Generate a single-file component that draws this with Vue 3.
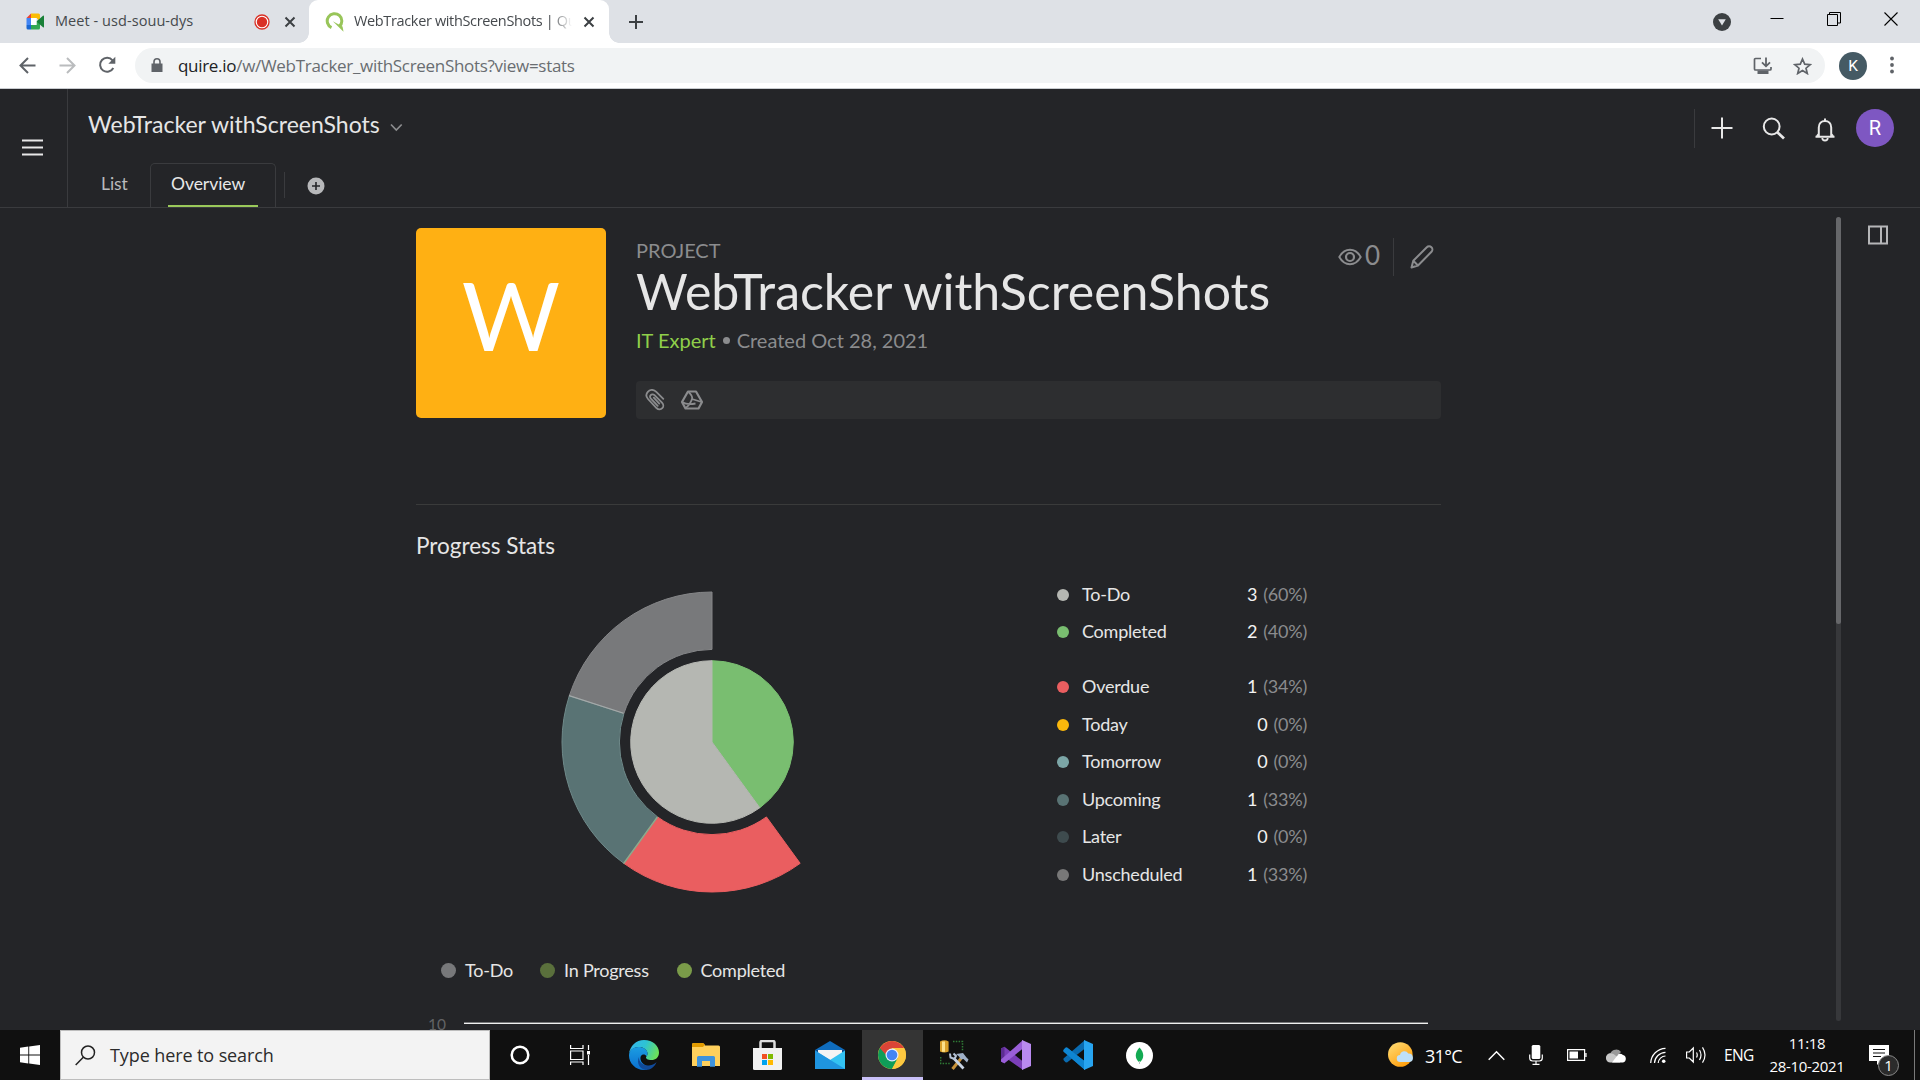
<script setup>
const stats = [
  [
    { label: 'To-Do', n: 3, pct: '60%', color: '#b5b7b2' },
    { label: 'Completed', n: 2, pct: '40%', color: '#79be70' },
  ],
  [
    { label: 'Overdue', n: 1, pct: '34%', color: '#ea5e60' },
    { label: 'Today', n: 0, pct: '0%', color: '#fbb80c' },
    { label: 'Tomorrow', n: 0, pct: '0%', color: '#7ca6a7' },
    { label: 'Upcoming', n: 1, pct: '33%', color: '#597374' },
    { label: 'Later', n: 0, pct: '0%', color: '#3e4b4e' },
    { label: 'Unscheduled', n: 1, pct: '33%', color: '#787878' },
  ],
]

const legend = [
  { label: 'To-Do', color: '#77787a', width: 99 },
  { label: 'In Progress', color: '#5a703c', width: 136.5 },
  { label: 'Completed', color: '#7a9b49', width: 120 },
]

const pt = (r, a) => {
  const t = (a * Math.PI) / 180
  return `${(r * Math.sin(t)).toFixed(2)} ${(-r * Math.cos(t)).toFixed(2)}`
}
const ring = (a, b, ri = 92.6, ro = 150) =>
  `M${pt(ro, a)}A${ro} ${ro} 0 0 1 ${pt(ro, b)}L${pt(ri, b)}A${ri} ${ri} 0 0 0 ${pt(ri, a)}Z`
const wedge = (a, b, r = 81.3) =>
  `M0 0L${pt(r, a)}A${r} ${r} 0 ${b - a > 180 ? 1 : 0} 1 ${pt(r, b)}Z`

const slices = [
  { d: ring(144, 216), fill: '#ea5e60', stroke: '#ea5e60' },
  { d: ring(216, 288), fill: '#597374', stroke: '#6f8a8a' },
  { d: ring(288, 360), fill: '#78797b', stroke: '#858688' },
  { d: wedge(0, 144), fill: '#79be70', stroke: '#79be70' },
  { d: wedge(144, 360), fill: '#b5b7b2', stroke: '#b5b7b2' },
]
</script>

<template>
  <div class="screen">
    <div class="tabstrip">
      <div class="tab idle">
        <svg class="fav" width="19" height="17" viewBox="0 0 19 17">
          <path d="M5 0.5V5H0.5z" fill="#ea4335" />
          <path d="M0.5 5H5v7H0.5z" fill="#4285f4" />
          <path d="M0.5 12H5v4.5H2a1.5 1.5 0 0 1-1.5-1.5z" fill="#1967d2" />
          <path d="M5 .5h7.5A1.5 1.5 0 0 1 14 2v6.500L10.500 5H5z" fill="#fbbc04" />
          <path d="M5 12h5.500V8.500L14 6v9a1.500 1.500 0 0 1-1.500 1.500H5z" fill="#34a853" />
          <path d="M10.500 8.500 17 2.700q1-.6 1 .5v10.600q0 1-1 .4z" fill="#188038" />
          <path d="M5 5h5.500v7H5z" fill="#fff" />
        </svg>
        <span class="tabtext meet">Meet - usd-souu-dys</span>
        <svg width="16" height="16" viewBox="0 0 16 16">
          <circle cx="8" cy="8" r="7" fill="#fff" stroke="#d93025" stroke-width="1.300" />
          <circle cx="8" cy="8" r="5.200" fill="#d93025" />
        </svg>
        <svg class="x1" width="12" height="12" viewBox="0 0 12 12"><path d="M1.500 1.500l9 9m0-9l-9 9" stroke="#3c4043" stroke-width="2" /></svg>
      </div>
      <div class="tab active">
        <svg class="q" width="20" height="20" viewBox="0 0 20 20">
          <path d="M6.500 15.600A7.300 7.300 0 1 1 14.300 14.500" fill="none" stroke="#98c559" stroke-width="3" />
          <path d="M7.800 9.200l9.700 5.300 1 5.200z" fill="#98c559" />
        </svg>
        <span class="tabtext web">WebTracker withScreenShots | Quire</span>
        <svg class="x2" width="12" height="12" viewBox="0 0 12 12"><path d="M1.500 1.500l9 9m0-9l-9 9" stroke="#3c4043" stroke-width="2" /></svg>
      </div>
      <svg class="newtab" width="16" height="16" viewBox="0 0 16 16"><path d="M8 1v14M1 8h14" stroke="#3c4043" stroke-width="2" /></svg>
      <div class="winctl">
        <svg width="18" height="18" viewBox="0 0 18 18"><circle cx="9" cy="9" r="9" fill="#3c4043" /><path d="M5.200 6.200h7.600L9 12.500z" fill="#dee1e6" /></svg>
        <svg class="min" width="14" height="14" viewBox="0 0 14 14"><path d="M.5 7.500H13.500" stroke="#000" /></svg>
        <svg class="max" width="14" height="14" viewBox="0 0 14 14"><path d="M.5 2.500h10v11H.5zM2.500 2.500v-2h11v10.500h-3" fill="none" stroke="#000" /></svg>
        <svg class="cls" width="14" height="14" viewBox="0 0 14 14"><path d="M.5.5l13 13m0-13l-13 13" stroke="#000" stroke-width="1.100" /></svg>
      </div>
    </div>

    <div class="toolbar">
      <svg class="back" width="17" height="17" viewBox="0 0 17 17"><path d="M16.500 8.500H2M9 1 1.500 8.500 9 16" fill="none" stroke="#5f6368" stroke-width="2" /></svg>
      <svg class="fwd" width="17" height="17" viewBox="0 0 17 17"><path d="M.5 8.500H15M8 1l7.500 7.500L8 16" fill="none" stroke="#babcbe" stroke-width="2" /></svg>
      <svg class="reload" width="18" height="18" viewBox="0 0 18 18"><path d="M15.300 12A7 7 0 1 1 14.500 4.300" fill="none" stroke="#5f6368" stroke-width="2" /><path d="M17.300 .8V7.800H10.300z" fill="#5f6368" /></svg>
      <div class="omni">
        <svg width="12" height="15" viewBox="0 0 12 15"><path d="M.5 5.500h11V14H.5z" fill="#5f6368" /><path d="M3 6V3.800a3 3 0 0 1 6 0V6" fill="none" stroke="#5f6368" stroke-width="1.600" /></svg>
        <span class="url"><b>quire.io</b>/w/WebTracker_withScreenShots?view=stats</span>
        <svg class="install" width="20" height="18" viewBox="0 0 20 18"><path d="M8 1.500H2.500a1 1 0 0 0-1 1v9.500a1 1 0 0 0 1 1h14.500a1 1 0 0 0 1-1v-2" fill="none" stroke="#5f6368" stroke-width="1.700" /><path d="M4.500 13.500h11V17h-11z" fill="#5f6368" /><path d="M13 .5v8.300M9 5.300l4 4 4-4" fill="none" stroke="#5f6368" stroke-width="1.800" /></svg>
        <svg class="star" width="19" height="18" viewBox="0 0 19 18"><path d="M9.500 2l2.200 5.100 5.500.5-4.200 3.600 1.300 5.300-4.800-2.900-4.800 2.900 1.300-5.300L1.800 7.600l5.500-.5z" fill="none" stroke="#5f6368" stroke-width="1.700" /></svg>
      </div>
      <span class="kav">K</span>
      <svg width="4" height="18" viewBox="0 0 4 18" fill="#5f6368"><circle cx="2" cy="2.500" r="1.900" /><circle cx="2" cy="9" r="1.900" /><circle cx="2" cy="15.500" r="1.900" /></svg>
    </div>

    <header class="apphead">
      <div class="menu">
        <svg width="21" height="17" viewBox="0 0 21 17"><path d="M0 1.500h21M0 8.500h21M0 15.500h21" stroke="#e8e8e8" stroke-width="2" /></svg>
      </div>
      <div class="headmain">
        <div class="titlerow">
          <span class="ptitle">WebTracker withScreenShots</span>
          <svg width="13" height="9" viewBox="0 0 13 9"><path d="M1 1.500l5.300 5.500L11.700 1.500" fill="none" stroke="#8c8d8f" stroke-width="1.700" /></svg>
        </div>
        <nav class="ptabs">
          <span class="ptab">List</span>
          <span class="ptab on"><i>Overview</i></span>
          <span class="sep"></span>
          <svg width="18" height="18" viewBox="0 0 18 18"><circle cx="9" cy="9" r="8.500" fill="#b7b8ba" /><path d="M9 5v8M5 9h8" stroke="#242528" stroke-width="1.600" /></svg>
        </nav>
      </div>
      <div class="actions">
        <svg class="a1" width="22" height="22" viewBox="0 0 22 22"><path d="M11 .5v21M.5 11h21" stroke="#e8e8e8" stroke-width="2" /></svg>
        <svg class="a2" width="24" height="24" viewBox="0 0 24 24" fill="none" stroke="#e8e8e8"><circle cx="9.700" cy="9.500" r="7.900" stroke-width="2" /><path d="M15.300 15.200l6.700 6.300" stroke-width="2.700" /></svg>
        <svg class="a3" width="22" height="24" viewBox="0 0 22 24"><path d="M11 .5v2.500M1.500 18.700h19M4.800 18.500V9.500C4.800 5.500 7.400 3 11 3s6.200 2.500 6.200 6.500v9M3 18l2-2.500M19 18l-2-2.500" fill="none" stroke="#e8e8e8" stroke-width="2" /><path d="M8.300 20a2.700 2.500 0 0 0 5.400 0" fill="none" stroke="#e8e8e8" stroke-width="1.800" /></svg>
        <span class="rav">R</span>
      </div>
    </header>

    <main class="stage">
      <div class="content">
        <section class="hero">
          <div class="logo">W</div>
          <div class="info">
            <div class="infohead">
              <div class="kind">PROJECT</div>
              <div class="views">
                <svg width="24" height="18" viewBox="0 0 24 18" fill="none" stroke="#8b8c8e" stroke-width="1.900"><path d="M1.300 9C4 4.200 7.500 1.800 12 1.800S20 4.200 22.700 9C20 13.800 16.500 16.200 12 16.200S4 13.800 1.300 9z" /><circle cx="12" cy="9" r="4" stroke-width="2.200" /></svg>
                <span>0</span>
                <svg class="pen" width="24" height="24" viewBox="0 0 24 24" fill="none" stroke="#8b8c8e" stroke-width="2" stroke-linejoin="round"><path d="M1.500 22.500l1.800-6.800L16.800 2.300a3.100 3.100 0 0 1 4.700 4.500L8 20.500zM3.300 15.700L8 20.500" /></svg>
              </div>
            </div>
            <h1>WebTracker withScreenShots</h1>
            <div class="sub"><em>IT Expert</em><s></s><span>Created Oct 28, 2021</span></div>
            <div class="attach">
              <svg width="20" height="22" viewBox="0 0 20 22" fill="none" stroke="#8b8c8e" stroke-width="1.800" stroke-linecap="round"><path d="M18.300 9.800L11.300 2.800C8 -.3 4.500 .8 2.800 2.800S.7 7.500 3 10l8.500 9c2 2 4.500 1.500 5.800.2s1.400-3.700-.3-5.500L9.500 6.200C8 4.800 6.500 5.300 5.700 6.200s-.9 2.200.2 3.500l6.800 7.200M8.800 8.700l5.500 5.900" /></svg>
              <svg class="drive" width="22" height="20" viewBox="0 0 22 20" fill="none" stroke="#8b8c8e" stroke-width="2.200" stroke-linejoin="round"><path d="M7 1.500h8l6 10.500-3.500 6.500H4.500L1 12z" /><path d="M7.500 2Q12 6 11 9l9.500 3M11 9Q9 15 4.500 18M1.500 12.300Q6 15 14.500 13.500" stroke-width="1.800" /></svg>
            </div>
          </div>
        </section>

        <h2>Progress Stats</h2>
        <section class="progress">
          <svg class="donut" width="302" height="302" viewBox="-151 -151 302 302">
            <path v-for="(s, i) in slices" :key="i" :d="s.d" :fill="s.fill" :stroke="s.stroke" stroke-width="1" />
            <path d="M-143 -46.400L-88.500 -28.800" stroke="#a3aaaa" stroke-width="1.200" />
            <path d="M-88.300 121.500L-54.600 75" stroke="#8fa98c" stroke-width="1.400" />
          </svg>
          <div class="stats">
            <div v-for="(g, gi) in stats" :key="gi" class="group">
              <div v-for="r in g" :key="r.label" class="row">
                <i class="dot" :style="{ background: r.color }"></i>
                <span class="name">{{ r.label }}</span>
                <span class="num">{{ r.n }}</span>
                <span class="pct">({{ r.pct }})</span>
              </div>
            </div>
          </div>
        </section>

        <section class="legend">
          <div v-for="l in legend" :key="l.label" :style="{ width: l.width + 'px' }">
            <i class="dot big" :style="{ background: l.color }"></i>{{ l.label }}
          </div>
        </section>
        <div class="axis"><span>10</span><i></i></div>
      </div>
      <div class="scroll"><i></i></div>
      <svg class="panel" width="20" height="20" viewBox="0 0 20 20" fill="none" stroke="#b5b6b8" stroke-width="2"><path d="M1 1.500h18v17H1zM13 1.500v17" /></svg>
    </main>

    <footer class="taskbar">
      <svg class="start" width="20" height="20" viewBox="0 0 20 20" fill="#fff"><path d="M0 2.800l8.300-1.200v7.900H0zM9.200 1.500L20 0v9.500H9.200zM0 10.400h8.300v8L0 17.200zM9.200 10.400H20V20L9.200 18.500z" /></svg>
      <div class="search">
        <svg width="21" height="21" viewBox="0 0 21 21" fill="none" stroke="#222" stroke-width="1.500"><circle cx="13" cy="7.500" r="6.500" /><path d="M8.300 12.200L.7 20" /></svg>
        <span>Type here to search</span>
      </div>
      <div class="apps">
        <svg class="cort" width="20" height="20" viewBox="0 0 20 20"><circle cx="10" cy="10" r="8.300" fill="none" stroke="#fff" stroke-width="2.500" /></svg>
        <svg class="tv" width="21" height="20" viewBox="0 0 21 20" fill="none" stroke="#fff" stroke-width="1.200"><path d="M.6 0v3.500h12.400V0M.6 6h12.400v8.500H.6zM.6 20v-3h12.400v3M18.500 0v5M18.500 10v10" /><path d="M17 6h3v3.500h-3z" fill="#fff" stroke="none" /></svg>
        <svg class="edge" width="30" height="30" viewBox="0 0 30 30">
          <defs>
            <linearGradient id="e1" x1="0" y1=".2" x2="1" y2=".5"><stop offset="0" stop-color="#35b5ee" /><stop offset=".5" stop-color="#2dc3d4" /><stop offset="1" stop-color="#6be15a" /></linearGradient>
            <linearGradient id="e2" x1="0" y1="0" x2="0" y2="1"><stop offset="0" stop-color="#1b9de2" /><stop offset="1" stop-color="#0b6fd0" /></linearGradient>
          </defs>
          <path d="M0 14C1 6 7 0 15 0c9 0 15 6 15 12.500 0 5-3.500 7.500-7.500 7.500-4 0-5.500-1.500-5.500-2.500s1.500-1.500 1.500-4C18.500 10 14.500 7 10 7 5 7 1 10 0 14z" fill="url(#e1)" />
          <path d="M0 15.500C0 10 4.500 7 9.500 7c4.500 0 9 2.500 9 6.500 0 1.500-.6 2.500-1 3-1-2-3-2.500-4.500-1.500-3 2-2 9 6 11.500l-1 3.200C8 31.500 0 24 0 15.500z" fill="url(#e2)" />
          <path d="M10 17c-.5 5 4 9 10 8.500 3.500-.3 6-1.800 7.500-3.500C26 26.500 21.500 30 17 30 11 29.500 7 23 10 17z" fill="#114a99" />
        </svg>
        <svg class="exp" width="28" height="24" viewBox="0 0 28 24"><path d="M0 1.500A1.500 1.500 0 0 1 1.500 0H11l2 2.500h13.500A1.500 1.500 0 0 1 28 4v19H0z" fill="#ffd05c" /><path d="M0 4V1.500A1.500 1.500 0 0 1 1.500 0H11l2 1.500L11 4z" fill="#e29b00" /><path d="M5 23.800V14.500A1.500 1.500 0 0 1 6.500 13h15a1.500 1.500 0 0 1 1.500 1.500v9.300h-5V18h-8v5.800z" fill="#3f93dc" /></svg>
        <svg class="store" width="29" height="30" viewBox="0 0 29 30"><path d="M7.500 9V2.500A1.500 1.500 0 0 1 9 1h11a1.500 1.500 0 0 1 1.500 1.500V9" fill="none" stroke="#ddd" stroke-width="2.500" /><path d="M0 8h29v20.500a1.500 1.500 0 0 1-1.500 1.500h-26A1.500 1.500 0 0 1 0 28.500z" fill="#f1f1f1" /><path d="M9 14h5v5H9z" fill="#f25022" /><path d="M15 14h5v5h-5z" fill="#7fba00" /><path d="M9 20h5v5H9z" fill="#00a4ef" /><path d="M15 20h5v5h-5z" fill="#ffb900" /></svg>
        <svg class="mail" width="30" height="28" viewBox="0 0 30 28"><path d="M0 9L15 0l15 9z" fill="#0f6cbd" /><path d="M0 9h30v6H0z" fill="#0b4a8f" /><path d="M3 9h24v8L15 20 3 17z" fill="#f4f4f4" /><path d="M0 9.500L15 19 30 9.500V28H0z" fill="#33c2f2" /><path d="M0 9.500L30 28H0z" fill="#1f95e0" /></svg>
        <div class="chrome">
          <svg width="28" height="28" viewBox="0 0 28 28"><circle cx="14" cy="14" r="14" fill="#fcc934" /><path d="M14 14L14 7.500 1.880 7A14 14 0 0 0 14 28l5.500-10.500z" fill="#0f9d58" /><path d="M1.880 7A14 14 0 0 1 26.120 7H14l-6 7z" fill="#db4437" /><path d="M26.120 7H14l6 10.500L14 28A14 14 0 0 0 26.120 7z" fill="#fdc840" /><circle cx="14" cy="14" r="6.500" fill="#e8eefc" /><circle cx="14" cy="14" r="5.300" fill="#4285f4" /></svg>
        </div>
        <svg class="tools" width="29" height="30" viewBox="0 0 29 30"><path d="M0 1.500Q4.300 -1 8.600 1.500v10q-4.300 2-8.600 0z" fill="#d9a02a" /><path d="M2 1.500h3v10.300H2z" fill="#fbe08a" /><path d="M13 1.500h9.500v10M.7 17v6.500h9" fill="none" stroke="#2f7a35" stroke-width="1.500" stroke-dasharray="1.500 1.300" /><path d="M12.500 29L21 18.500" stroke="#c8923a" stroke-width="3" /><path d="M16 14l7-1 3.500 4.500 2 2-1.500 3-3.500-3.500-2.500.5-2-3z" fill="#9fb0c8" /><path d="M13.500 18l10 10.500" stroke="#c7d3e3" stroke-width="2.800" /><path d="M10 13.500l.5 4 4 1.500 1.500-3-2.500-2.500" fill="none" stroke="#b6c3d6" stroke-width="2" /></svg>
        <svg class="vs" width="30" height="30" viewBox="0 0 30 30"><path d="M0 8.500l3.500-1.800L22 21.500V30L3.500 17v6.500L0 21.500z" fill="#7b3fb8" /><path d="M0 8.500L3.500 6.700v16.600L0 21.500z" fill="#5c2d91" /><path d="M3.500 23.300L22 8.500V0L0 19.500v2z" fill="#9a5fd8" /><path d="M21 0l9 4v22l-9 4z" fill="#b98af0" /></svg>
        <svg class="code" width="30" height="30" viewBox="0 0 30 30"><path d="M.5 10l2-2.300 1.500-.2L22 21.500V30L.5 11.500z" fill="#0f7fc9" /><path d="M.5 20l2 2.300 1.500.2L22 8.500V0L.5 18.500z" fill="#0a6bb0" /><path d="M.5 10l2-2.300 1.500-.2L22 21.500V30L.5 11.500z" fill="#0e85d2" /><path d="M21 0l9 4v22l-9 4z" fill="#27a4f0" /></svg>
        <svg class="mongo" width="27" height="27" viewBox="0 0 27 27"><circle cx="13.500" cy="13.500" r="13.500" fill="#fff" /><path d="M13.500 5.500C18.500 11 18.500 16.500 13.500 20.500 8.500 16.500 8.500 11 13.500 5.500z" fill="#13aa52" /><path d="M13.500 19v3" stroke="#b8c4c2" /></svg>
      </div>
      <div class="tray">
        <svg class="sun" width="26" height="26" viewBox="0 0 26 26"><defs><linearGradient id="s1" x1="0" y1="0" x2=".7" y2="1"><stop offset="0" stop-color="#ffe07a" /><stop offset="1" stop-color="#ff9d0a" /></linearGradient></defs><circle cx="12.300" cy="12.500" r="12.300" fill="url(#s1)" /><path d="M12.500 20a3.500 3.500 0 0 1-.5-7 4.500 4.500 0 0 1 8.300-1.500A4.300 4.300 0 0 1 21.500 20z" fill="#bfe0f8" /></svg>
        <span class="temp">31°C</span>
        <svg class="up" width="17" height="11" viewBox="0 0 17 11"><path d="M.7 9.800L8.500 1.800l7.800 8" fill="none" stroke="#fff" stroke-width="1.500" /></svg>
        <svg class="mic" width="14" height="20" viewBox="0 0 14 20"><rect x="2.700" y="0" width="8.600" height="14" rx="1.500" fill="#fff" /><path d="M.7 9.500v3.500q0 3 3 3h6.600q3 0 3-3V9.500M7 16v3M3.500 19.300h7" fill="none" stroke="#fff" stroke-width="1.200" /></svg>
        <svg class="bat" width="20" height="12" viewBox="0 0 20 12"><path d="M.6.6h17v10.800H.6zM19 4v4" fill="none" stroke="#fff" stroke-width="1.200" /><path d="M2.500 2.500h8.500v7H2.500z" fill="#fff" /></svg>
        <svg class="cloud" width="21" height="15" viewBox="0 0 21 15"><path d="M4.500 5A6 5.500 0 0 1 15 4l-5 5-5 5A4.500 4.500 0 0 1 4.500 5z" fill="#9a9a9a" /><path d="M0 10.500A4.500 4.500 0 0 1 5 5.500q2-.5 4.500 2L15 11l-1 3.500H4.500A4.200 4.200 0 0 1 0 10.500z" fill="#c8c8c8" /><path d="M6 14.500L12.500 6a5 5 0 0 1 4.500 1A3.900 3.900 0 0 1 17 14.500z" fill="#fff" /></svg>
        <svg class="wifi" width="17" height="17" viewBox="0 0 17 17" fill="none" stroke="#fff" stroke-width="1.200"><path d="M.7 16A15.300 15.300 0 0 1 15.500 1.300M4.500 16A11.300 11.300 0 0 1 15.500 5.300M8.200 16A7.400 7.400 0 0 1 15.500 9" /><circle cx="13.700" cy="14.300" r="1.800" fill="#fff" stroke="none" /></svg>
        <svg class="vol" width="21" height="18" viewBox="0 0 21 18" fill="none" stroke="#fff" stroke-width="1.200"><path d="M.6 6h2.700l4-4v14l-4-4H.6zM10.500 6.500q1.500 2.500 0 5M13.500 4q3 5 0 10M16.500 1.300q5 7.700 0 15.400" /></svg>
        <span class="lang">ENG</span>
        <div class="clock"><span>11:18</span><span class="date">28-10-2021</span></div>
        <div class="note">
          <svg width="20" height="20" viewBox="0 0 20 20"><path d="M0 0h20v16h-8l-4 4v-4H0z" fill="#fff" /><path d="M4 4.500h12M4 8h12M4 11.500h8" stroke="#111" stroke-width="1.200" /></svg>
          <span>1</span>
        </div>
        <i class="peek"></i>
      </div>
    </footer>
  </div>
</template>

<style>
html,
body {
  margin: 0;
  background: #242528;
  overflow: hidden;
}
</style>

<style scoped>
.screen {
  width: 1920px;
  height: 1080px;
  display: flex;
  flex-direction: column;
  overflow: hidden;
  background: #242528;
  color: #e6e6e6;
  font-family: Lato, "Liberation Sans", sans-serif;
}
svg {
  flex: none;
  display: block;
}
.tabstrip {
  height: 43px;
  flex: none;
  display: flex;
  align-items: center;
  background: #dee1e6;
  font-family: "Open Sans", "Noto Sans", sans-serif;
}
.tab {
  display: flex;
  align-items: center;
  height: 43px;
  box-sizing: border-box;
}
.idle {
  width: 309px;
  padding-left: 26px;
}
.tabtext {
  font-size: 14.500px;
  line-height: 20px;
  color: #45494d;
  white-space: nowrap;
  overflow: hidden;
  margin-top: -2px;
}
.meet {
  width: 199px;
  margin-left: 10px;
  letter-spacing: 0.060px;
}
.x1 {
  margin-left: 14px;
}
.active {
  position: relative;
  width: 300px;
  padding-left: 16px;
  background: #fff;
  border-radius: 9px 9px 0 0;
}
.active::before,
.active::after {
  content: "";
  position: absolute;
  bottom: 0;
  width: 10px;
  height: 10px;
}
.active::before {
  left: -10px;
  background: radial-gradient(circle at 0 0, transparent 9.500px, #fff 10px);
}
.active::after {
  right: -10px;
  background: radial-gradient(circle at 100% 0, transparent 9.500px, #fff 10px);
}
.web {
  width: 218px;
  margin-left: 9px;
  letter-spacing: -0.350px;
  mask-image: linear-gradient(90deg, #000 90%, transparent 100%);
}
.x2 {
  margin-left: 11px;
}
.newtab {
  margin-left: 19px;
}
.winctl {
  margin-left: auto;
  display: flex;
  align-items: center;
  padding-right: 22px;
}
.min {
  margin-left: 39px;
  margin-top: -8px;
}
.max {
  margin-left: 43px;
  margin-top: -6px;
}
.cls {
  margin-left: 43px;
  margin-top: -6px;
}
.toolbar {
  height: 46px;
  flex: none;
  box-sizing: border-box;
  display: flex;
  align-items: center;
  background: #fff;
  border-bottom: 1px solid #c9ccd0;
  padding-left: 19px;
  font-family: "Open Sans", "Noto Sans", sans-serif;
}
.toolbar > svg {
  margin-top: -1px;
}
.toolbar > .fwd {
  margin-left: 23px;
}
.toolbar > .reload {
  margin-left: 22px;
}
.omni {
  width: 1690px;
  height: 35px;
  margin-left: 19px;
  border-radius: 18px;
  background: #f1f3f4;
  display: flex;
  align-items: center;
  box-sizing: border-box;
  padding-left: 16px;
}
.url {
  margin-left: 15px;
  font-size: 17px;
  letter-spacing: -0.300px;
  line-height: 24px;
  color: #696d71;
  flex: 1;
}
.url b {
  font-weight: 400;
  color: #202124;
}
.star {
  margin: 0 13px 0 20px;
}
.kav {
  width: 28px;
  height: 28px;
  margin: 0 23px 0 14px;
  border-radius: 50%;
  background: #455a64;
  color: #fff;
  font: 15.500px/28px Roboto, sans-serif;
  text-align: center;
}
.apphead {
  height: 119px;
  flex: none;
  box-sizing: border-box;
  display: flex;
  border-bottom: 1px solid #3a3b3e;
}
.menu {
  width: 68px;
  box-sizing: border-box;
  border-right: 1px solid #3a3b3e;
  padding: 50px 0 0 22px;
}
.headmain {
  flex: 1;
  display: flex;
  flex-direction: column;
}
.titlerow {
  height: 71px;
  display: flex;
  align-items: center;
  padding-left: 20px;
  font-size: 23px;
}
.ptitle {
  width: 292px;
  white-space: nowrap;
}
.titlerow svg {
  margin: 7px 0 0 10px;
}
.ptabs {
  display: flex;
  margin-top: 4px;
  height: 44px;
  font-size: 17.500px;
  letter-spacing: -0.050px;
}
.ptab {
  line-height: 37px;
  padding-left: 33px;
  width: 49px;
  color: #b9babc;
  padding-top: 2px;
  height: 42px;
}
.on {
  box-sizing: border-box;
  width: 126px;
  height: 44px;
  padding: 1px 17px 0;
  border: 1px solid #3a3b3e;
  border-bottom: 0;
  border-radius: 5px 5px 0 0;
  background: #242528;
  color: #e8e8e8;
}
.on i {
  display: block;
  box-sizing: border-box;
  width: 90px;
  height: 42px;
  padding-left: 3px;
  font-style: normal;
  border-bottom: 2px solid #9ac95a;
}
.sep {
  width: 1px;
  height: 26px;
  margin: 9px 22px 0 8px;
  background: #3a3b3e;
}
.ptabs svg {
  margin-top: 13.500px;
}
.actions {
  display: flex;
  align-items: center;
  height: 39px;
  margin: 20px 26px 0 0;
  border-left: 1px solid #3a3b3e;
}
.a1 {
  margin: -1px 0 0 16px;
}
.a2 {
  margin: 1px 0 0 29px;
}
.a3 {
  margin: 2px 0 0 28px;
}
.rav {
  width: 38px;
  height: 38px;
  margin: -1px 0 0 20px;
  border-radius: 50%;
  background: #7e57c2;
  color: #fff;
  font: 20px/38px Roboto, sans-serif;
  text-align: center;
}
.stage {
  flex: 1;
  min-height: 0;
  display: flex;
  align-items: flex-start;
  overflow: hidden;
  padding-left: 416px;
}
.content {
  width: 1025px;
  height: 822px;
  overflow: hidden;
  padding-top: 20px;
  box-sizing: border-box;
}
.hero {
  display: flex;
  gap: 30px;
  height: 276px;
  border-bottom: 1px solid #3a3b3b;
}
.logo {
  width: 190px;
  height: 190px;
  border-radius: 5px;
  background: #ffb013;
  color: #fff;
  font-size: 95px;
  line-height: 172px;
  text-align: center;
}
.info {
  width: 805px;
}
.infohead {
  display: flex;
  justify-content: space-between;
  height: 33px;
  color: #8b8c8e;
}
.kind {
  font-size: 20px;
  line-height: 24px;
  margin-top: 10px;
}
.views {
  display: flex;
  align-items: center;
  height: 38px;
  margin: 10px 7px 0 0;
  font-size: 26px;
}
.views span {
  width: 32px;
  height: 38px;
  line-height: 34px;
  padding-left: 3px;
  box-sizing: border-box;
  border-right: 1px solid #3a3b3e;
}
.pen {
  margin-left: 16px;
}
h1 {
  margin: 0;
  font-size: 50px;
  line-height: 60px;
  font-weight: 400;
  white-space: nowrap;
}
.sub {
  display: flex;
  align-items: center;
  margin-top: 7px;
  font-size: 20px;
  line-height: 24px;
  color: #8b8c8e;
}
.sub em {
  font-style: normal;
  color: #8fcf4a;
}
.sub s {
  width: 7px;
  height: 7px;
  border-radius: 50%;
  background: #8b8c8e;
  margin: 0 7px 0 7px;
}
.attach {
  display: flex;
  align-items: center;
  height: 38px;
  margin-top: 29px;
  padding-left: 9px;
  border-radius: 4px;
  background: #2d2e30;
}
.drive {
  margin-left: 16px;
}
h2 {
  margin: 27px 0 0;
  font-size: 22.500px;
  line-height: 27px;
  font-weight: 400;
}
.progress {
  display: flex;
  margin-top: 16px;
  height: 341px;
}
.donut {
  margin: 15.500px 0 0 144.500px;
}
.stats {
  width: 250px;
  margin-left: 194.500px;
  font-size: 18px;
  letter-spacing: -0.220px;
}
.group {
  margin-bottom: 17.500px;
}
.row {
  display: flex;
  align-items: center;
  height: 37.500px;
}
.dot {
  width: 12px;
  height: 12px;
  border-radius: 50%;
  margin-right: 13px;
  margin-top: 2px;
}
.name {
  flex: 1;
}
.pct {
  margin-left: 6px;
  color: #8b8c8e;
}
.num {
  color: #f2f2f2;
}
.legend {
  display: flex;
  margin-top: 41px;
  padding-left: 25px;
  font-size: 18px;
  line-height: 26px;
  letter-spacing: -0.220px;
}
.legend div {
  display: flex;
  align-items: center;
  white-space: nowrap;
}
.big {
  width: 15px;
  height: 15px;
  margin: 1px 9px 0 0;
}
.axis {
  display: flex;
  align-items: flex-start;
  margin-top: 32px;
  padding-left: 12px;
  font-size: 15.500px;
  line-height: 18px;
  color: #626365;
}
.axis span {
  width: 36px;
}
.axis i {
  width: 964px;
  height: 1px;
  margin-top: 7px;
  background: #f0f0f0;
  border-top: 1px solid #77787a;
}
.scroll {
  width: 5px;
  height: 804px;
  margin: 9px 0 0 395px;
  border-radius: 3px;
  background: #37383b;
}
.scroll i {
  display: block;
  height: 407px;
  border-radius: 3px;
  background: #66676a;
}
.panel {
  margin: 17px 0 0 27px;
}
.taskbar {
  height: 50px;
  flex: none;
  display: flex;
  align-items: center;
  background: #101010;
  color: #fff;
  font-family: "Open Sans", "Noto Sans", sans-serif;
}
.start {
  margin: 0 20px;
}
.search {
  width: 430px;
  height: 50px;
  box-sizing: border-box;
  display: flex;
  align-items: center;
  padding-left: 14px;
  background: #f3f3f3;
  border: 1px solid #bdbdbd;
  color: #2b2b2b;
  font-size: 18px;
  letter-spacing: -0.100px;
}
.search span {
  margin-left: 14px;
}
.apps {
  display: flex;
  align-items: center;
}
.cort { margin-left: 20px; }
.tv { margin-left: 40px; }
.edge { margin-left: 38px; }
.exp { margin-left: 33px; }
.store { margin-left: 33px; }
.mail { margin-left: 33px; }
.chrome {
  width: 61px;
  height: 50px;
  margin-left: 17px;
  box-sizing: border-box;
  border-bottom: 3px solid #c9c0f8;
  background: #343434;
  padding: 11px 0 0 16px;
}
.tools { margin-left: 17px; }
.vs { margin-left: 32px; }
.code { margin-left: 32px; }
.mongo { margin-left: 33px; }
.tray {
  flex: 1;
  display: flex;
  align-items: center;
}
.sun { margin-left: 235px; }
.temp {
  width: 40px;
  margin: 2px 0 0 11px;
  font-size: 18px;
  letter-spacing: -0.700px;
}
.up { margin-left: 23px; }
.mic { margin-left: 24px; }
.bat { margin-left: 24px; }
.cloud { margin-left: 19px; }
.wifi { margin-left: 23px; }
.vol { margin-left: 19px; }
.lang {
  width: 30px;
  margin: 0 0 0 17px;
  font-size: 15.500px;
  letter-spacing: -0.700px;
}
.clock {
  width: 76px;
  margin-left: 15px;
  display: flex;
  flex-direction: column;
  align-items: center;
  font-size: 15px;
  line-height: 23px;
  letter-spacing: -0.350px;
  white-space: nowrap;
}
.note {
  position: relative;
  margin-left: 24px;
}
.note span {
  position: absolute;
  left: 9px;
  top: 10px;
  width: 19px;
  height: 19px;
  border: 1px solid #8a8a8a;
  border-radius: 50%;
  background: #2b2b2b;
  font-size: 15px;
  line-height: 18px;
  text-align: center;
}
.peek {
  width: 1px;
  height: 50px;
  margin-left: 25px;
  background: #7a7a7a;
}
</style>
